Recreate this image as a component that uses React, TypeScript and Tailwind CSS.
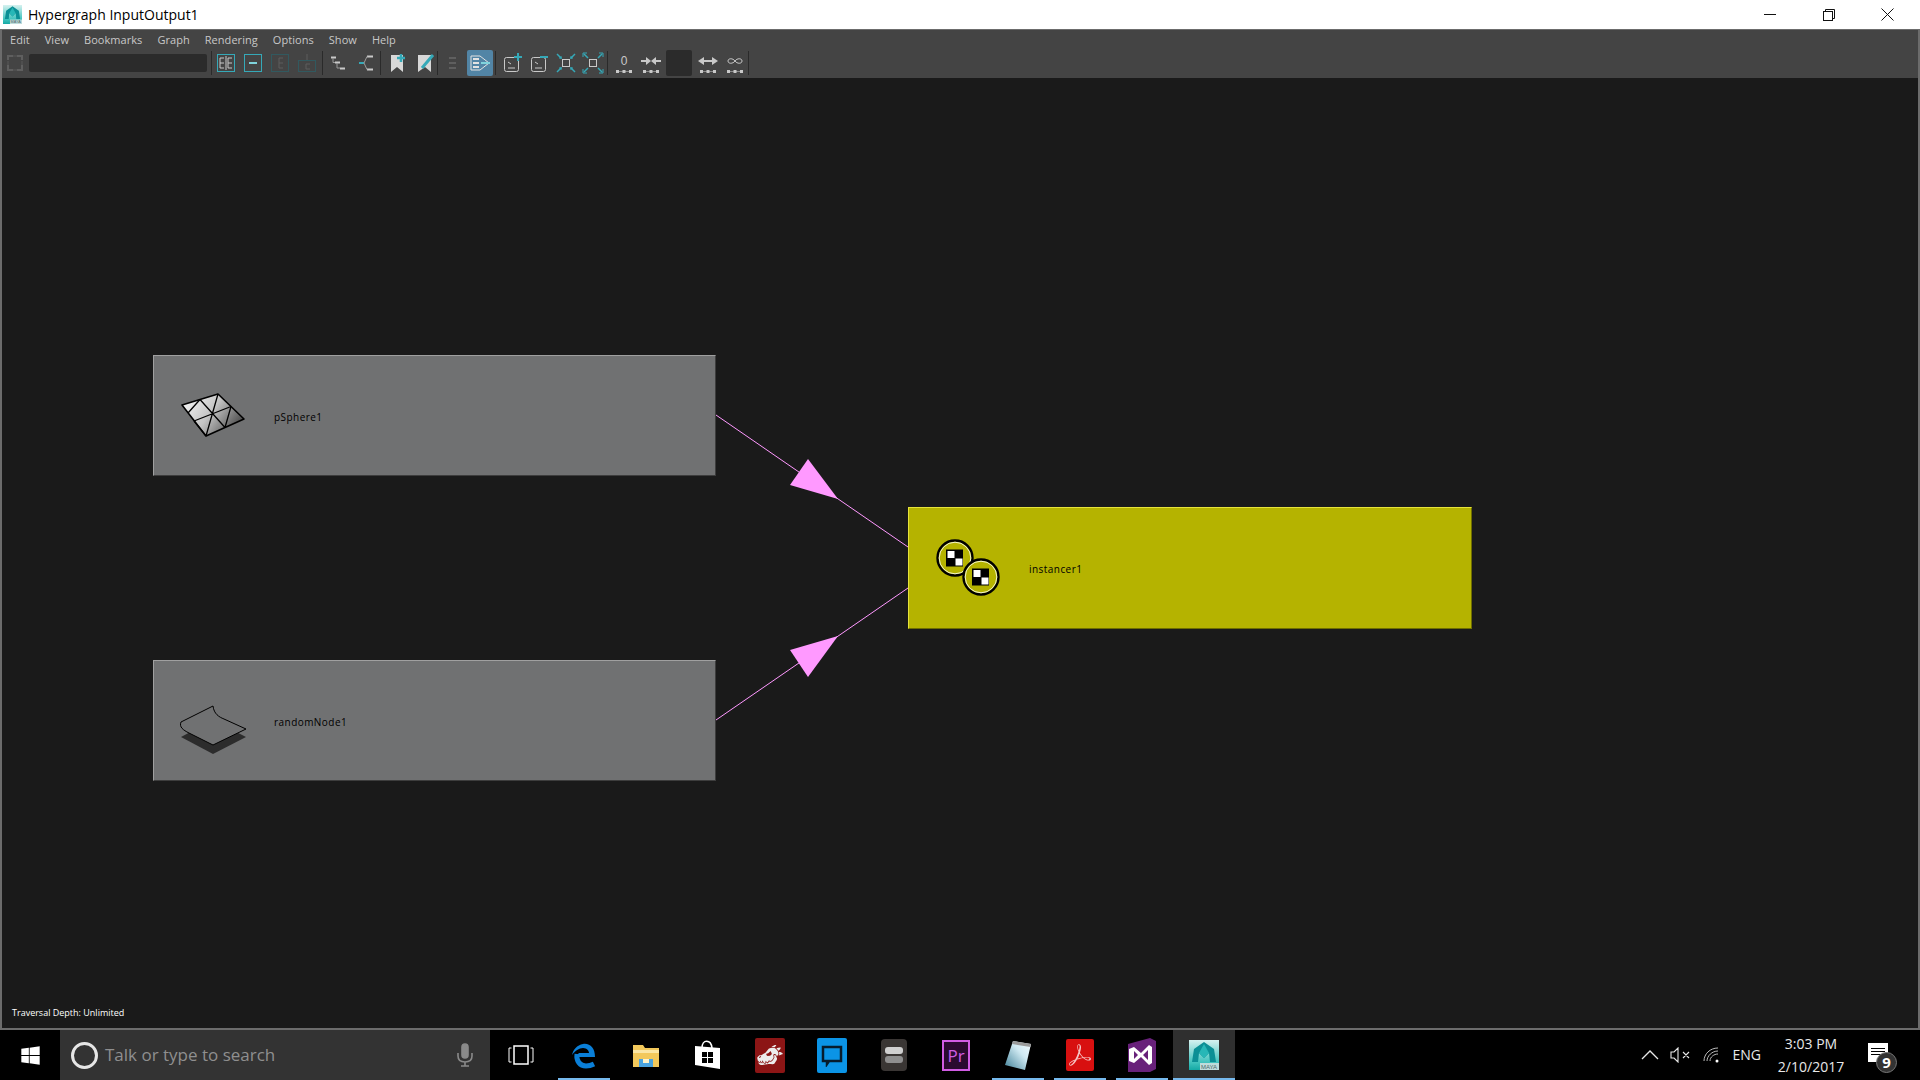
import type { ReactNode } from "react";
import { FaWindows } from "react-icons/fa";
import { GiDragonHead } from "react-icons/gi";
import { SiAdobeacrobatreader } from "react-icons/si";

const menus = ["Edit", "View", "Bookmarks", "Graph", "Rendering", "Options", "Show", "Help"];

const L = "#c9c9c9";
const T = "#35a9b8";

function MayaLogo({ size }: { size: number }) {
  return (
    <svg width={size} height={size} viewBox="0 0 30 30">
      <defs>
        <linearGradient id="mayaBg" x1="0" y1="0" x2="0" y2="1">
          <stop offset="0" stopColor="#d6f2f0" />
          <stop offset="0.75" stopColor="#3fc2bd" />
          <stop offset="1" stopColor="#15a9a5" />
        </linearGradient>
      </defs>
      <rect width="30" height="30" fill="url(#mayaBg)" />
      <path d="M3 22 L5 9 L15 2 L25 9 L27 22 L21 22 L20 13 L15 18 L10 13 L9 22 Z" fill="#0b8f95" />
      <path d="M10 13 L15 4 L20 13 L15 18 Z" fill="#27b7b7" />
      <rect x="11" y="23" width="19" height="7" fill="#bfdcdb" />
      <text x="12" y="29" fontSize="6" fontFamily="'Liberation Sans', sans-serif" fill="#4d6a6b">MAYA</text>
    </svg>
  );
}

function Dots() {
  return (
    <g>
      <path d="M5 20.500h14" stroke="#8a8a8a" strokeWidth="1" />
      <rect x="4" y="19" width="3" height="3" fill={L} />
      <rect x="10.500" y="19" width="3" height="3" fill={L} />
      <rect x="17" y="19" width="3" height="3" fill={L} />
    </g>
  );
}

function Tool({ children, className = "" }: { children?: ReactNode; className?: string }) {
  return (
    <div className={`flex h-[26px] w-[27px] shrink-0 items-center justify-center ${className}`}>
      <svg width="24" height="24" viewBox="0 0 24 24" fill="none">
        {children}
      </svg>
    </div>
  );
}

function Sep({ className = "" }: { className?: string }) {
  return <div className={`h-[24px] w-px shrink-0 bg-[#2a2a2a] ${className}`} />;
}

function Toolbar() {
  return (
    <div className="flex h-[28px] items-center pb-[3px]">
      <div className="ml-[1px] w-[25px] shrink-0">
        <svg width="24" height="24" viewBox="0 0 24 24" fill="none" stroke="#5f5f5f" strokeWidth="2">
          <path d="M5 9V5h5M14 5h5v4M19 14v5h-5M10 19H5v-5" />
          <path d="M5 10v4M19 10v4M10 5h4M10 19h4" stroke="#4e4e4e" />
        </svg>
      </div>
      <div className="ml-[1px] h-[18px] w-[178px] shrink-0 rounded-[2px] bg-[#2b2b2b]" />
      <Sep className="ml-[4px]" />
      <Tool>
        <rect x="3.5" y="3.5" width="17" height="17" stroke={T} />
        <path d="M6 7h4M6 7v10M6 12h4M6 17h4M14 7h4M14 7v10M14 12h4M14 17h4" stroke={L} />
        <path d="M12 5v14" stroke={L} />
      </Tool>
      <Tool>
        <rect x="3.5" y="3.5" width="17" height="17" stroke={T} />
        <path d="M8 12h8" stroke="#7fd3dc" strokeWidth="2" />
      </Tool>
      <Tool>
        <rect x="3.5" y="3.5" width="17" height="17" stroke="#31595f" />
        <path d="M11 7h4M11 7v10M11 12h4M11 17h4" stroke="#5d5d5d" />
      </Tool>
      <Tool>
        <rect x="3.5" y="9.5" width="17" height="11" stroke="#31595f" />
        <path d="M12 3v6M11 13h4M11 13v5h4" stroke="#5d5d5d" />
      </Tool>
      <Sep className="ml-[2px]" />
      <Tool className="ml-[1px]">
        <path d="M5 6.500h5M9 11.500h5M14 17.500h5" stroke={L} strokeWidth="2" />
        <path d="M7 7v4.500h2M11 12v5h3" stroke="#9a9a9a" strokeWidth="1" />
      </Tool>
      <Tool>
        <path d="M14 5.500h6M14 18.500h6" stroke={L} strokeWidth="2" />
        <path d="M6 12h5" stroke={T} strokeWidth="2" />
        <path d="M14 5.500l-3 6.500 3 6.500" stroke="#9a9a9a" strokeWidth="1" />
      </Tool>
      <Sep className="ml-[2px]" />
      <Tool className="ml-[3px]">
        <path d="M5 4h12v17l-6-5-6 5z" fill="#d8d8d8" />
        <path d="M15 3v8M11 7h8" stroke={T} strokeWidth="2.5" />
      </Tool>
      <Tool>
        <path d="M5 4h13v17l-6-5-7 5z" fill="#d8d8d8" />
        <path d="M9 17L20 4" stroke={T} strokeWidth="3" />
      </Tool>
      <Sep className="-ml-[1px]" />
      <Tool className="ml-[1px]">
        <path d="M8 7h7M8 12h7M8 17h7" stroke="#5f5f5f" strokeWidth="2" />
      </Tool>
      <div className="ml-[1px] flex h-[26px] w-[26px] shrink-0 items-center justify-center rounded-[2px] bg-[#5285a6]">
        <svg width="24" height="24" viewBox="0 0 24 24" fill="none">
          <path d="M3 5h9l9 7-9 7H3z" stroke="#e2e2e2" />
          <path d="M5 8h6M5 12h6M5 16h6" stroke="#e2e2e2" strokeWidth="2" />
          <path d="M13 12h9" stroke="#7fd3dc" strokeWidth="2" />
        </svg>
      </div>
      <Sep className="ml-[2px]" />
      <Tool className="ml-[2px]">
        <rect x="4.5" y="6.5" width="14" height="14" rx="2" stroke={L} />
        <path d="M8 11l3 2M8 17h7" stroke={L} />
        <path d="M18 2v8M14 6h8" stroke={T} strokeWidth="2" />
      </Tool>
      <Tool>
        <rect x="4.5" y="6.5" width="14" height="14" rx="2" stroke={L} />
        <path d="M8 11l3 2M8 17h7" stroke={L} />
        <path d="M13 6h8" stroke={T} strokeWidth="2" />
      </Tool>
      <Tool>
        <rect x="8.5" y="8.5" width="7" height="7" stroke={L} />
        <path d="M3 3l4 4M21 3l-4 4M3 21l4-4M21 21l-4-4" stroke={T} strokeWidth="1.5" />
        <path d="M8 7H5M7 8V5M16 7h3M17 8V5M8 17H5M7 16v3M16 17h3M17 16v3" stroke={T} />
      </Tool>
      <Tool>
        <rect x="8.5" y="8.5" width="7" height="7" stroke={L} />
        <path d="M3 3l4 4M21 3l-4 4M3 21l4-4M21 21l-4-4" stroke={T} strokeWidth="1.5" />
        <path d="M2 6V2h4M22 6V2h-4M2 18v4h4M22 18v4h-4" stroke={T} />
      </Tool>
      <Sep className="ml-[1px]" />
      <Tool className="ml-[2px]">
        <text x="12" y="14" textAnchor="middle" fontSize="12" fontFamily="'Liberation Sans', sans-serif" fill={L}>0</text>
        <Dots />
      </Tool>
      <Tool>
        <path d="M2 10h7M22 10h-7" stroke={L} strokeWidth="2" />
        <path d="M7 6l5 4-5 4zM17 6l-5 4 5 4z" fill={L} />
        <Dots />
      </Tool>
      <div className="ml-[2px] h-[26px] w-[26px] shrink-0 rounded-[2px] bg-[#2b2b2b]" />
      <Tool className="ml-[2px]">
        <path d="M6 10h12" stroke={L} strokeWidth="2" />
        <path d="M8 6l-6 4 6 4zM16 6l6 4-6 4z" fill={L} />
        <Dots />
      </Tool>
      <Tool>
        <path d="M12 10c-2-3-7-3-7 0s5 3 7 0c2-3 7-3 7 0s-5 3-7 0z" stroke={L} />
        <Dots />
      </Tool>
      <Sep />
    </div>
  );
}

function Node({
  x,
  y,
  icon,
  label,
  indent,
  yellow = false,
}: {
  x: string;
  y: string;
  icon: ReactNode;
  label: string;
  indent: string;
  yellow?: boolean;
}) {
  return (
    <div
      className={`absolute ${x} ${y} flex items-center border ${
        yellow
          ? "h-[122px] w-[564px] border-t-[#e6e43a] border-l-[#e6e43a] border-r-[#6e6d00] border-b-[#6e6d00] bg-[#b5b300]"
          : "h-[121px] w-[563px] border-t-[#a0a0a0] border-l-[#a0a0a0] border-r-[#3d3d3d] border-b-[#3d3d3d] bg-[#707172]"
      }`}
    >
      <div className={`shrink-0 ${indent}`}>{icon}</div>
      <span
        className={`mt-[2px] text-[10px] leading-none tracking-[0.45px] text-black [font-family:'Open_Sans',sans-serif] ${
          yellow ? "ml-[21px]" : "ml-[26px]"
        }`}
      >
        {label}
      </span>
    </div>
  );
}

function SphereIcon() {
  return (
    <svg width="72" height="72" viewBox="0 0 72 72" fill="none" className="block">
      <defs>
        <linearGradient id="sph" x1="0" y1="0" x2="1" y2="0.5">
          <stop offset="0" stopColor="#ffffff" />
          <stop offset="0.55" stopColor="#c4c4c4" />
          <stop offset="1" stopColor="#555555" />
        </linearGradient>
      </defs>
      <path d="M6 25L42 14L68 39L30 56Z" fill="url(#sph)" stroke="#000" strokeWidth="1.6" strokeLinejoin="round" />
      <path d="M18 41L55 26.5M24 19.5L49 47.5M24 19.5L12 33M42 14L30 56M55 26.5L49 47.5M18 41L30 56" stroke="#000" strokeWidth="1.3" />
    </svg>
  );
}

function PaperIcon() {
  return (
    <svg width="72" height="72" viewBox="0 0 72 72" fill="none" className="block">
      <path d="M5 52L37 35L70 52L37 69Z" fill="#2c2c2c" />
      <path d="M37 21C38 29 43 32 48 34L70 44L37 60L13 48C7 45 3 42 5 37Z" fill="#707172" stroke="#000" />
    </svg>
  );
}

function Checker({ cx, cy }: { cx: number; cy: number }) {
  return (
    <g>
      <circle cx={cx} cy={cy} r="17.5" fill="#b5b300" stroke="#000" strokeWidth="2.4" />
      <circle cx={cx} cy={cy} r="15.8" stroke="#f3f3d0" strokeWidth="1" fill="none" />
      <rect x={cx - 9} y={cy - 8.5} width="17" height="17" fill="#000" />
      <rect x={cx - 7.5} y={cy - 7} width="7" height="7" fill="#fff" />
      <rect x={cx + 0.5} y={cy + 0.5} width="7" height="7" fill="#fff" />
    </g>
  );
}

function InstancerIcon() {
  return (
    <svg width="72" height="72" viewBox="0 0 72 72" fill="none" className="block">
      <Checker cx={19} cy={26} />
      <Checker cx={45} cy={45} />
    </svg>
  );
}

function Graph() {
  return (
    <div className="relative min-h-0 flex-1 overflow-hidden bg-[#1a1a1a]">
      <svg className="absolute inset-0" width="1916" height="950" viewBox="0 0 1916 950" fill="none">
        <path d="M714 337L906 469M714 642L906 510" stroke="#ff99ff" strokeWidth="1" />
        <path d="M806 381L788 407L836 421Z" fill="#ff99ff" />
        <path d="M836 558L788 572L806 599Z" fill="#ff99ff" />
      </svg>
      <Node x="left-[151px]" y="top-[277px]" icon={<SphereIcon />} label="pSphere1" indent="ml-[22px]" />
      <Node x="left-[151px]" y="top-[582px]" icon={<PaperIcon />} label="randomNode1" indent="ml-[22px]" />
      <Node x="left-[906px]" y="top-[429px]" icon={<InstancerIcon />} label="instancer1" indent="ml-[27px]" yellow />
      <span className="absolute bottom-[11px] left-[10px] text-[9px] leading-none text-white [font-family:'Open_Sans',sans-serif]">
        Traversal Depth: Unlimited
      </span>
    </div>
  );
}

function EdgeIcon() {
  return (
    <svg width="30" height="30" viewBox="0 0 30 30" fill="none">
      <path d="M6 17h20C26 8 21 3 14 4 8 5 4 10 3 15c3-4 7-7 11-7 4 0 6 3 6 5H10" fill="#0a7fd8" />
      <path d="M8 14c-1 7 3 12 9 12 3 0 6-1 8-2" stroke="#0a7fd8" strokeWidth="5" />
    </svg>
  );
}

function StoreIcon() {
  return (
    <svg width="28" height="32" viewBox="0 0 28 32" fill="none">
      <path d="M8 9C8 0 17 0 18 9" stroke="#fff" strokeWidth="1.6" />
      <path d="M1 7L26 9V30L1 26Z" fill="#fff" />
      <path d="M8 13h5v5H8zM14 13h5v5h-5zM8 19h5v5H8zM14 19h5v5h-5z" fill="#000" />
    </svg>
  );
}

function ExplorerIcon() {
  return (
    <svg width="28" height="26" viewBox="0 0 28 26">
      <path d="M1 3h10l2 3h14v19H1z" fill="#f2c85b" />
      <path d="M1 8h26v3H1z" fill="#fbe6a4" />
      <path d="M7 17h14v8H7z" fill="#4aa3df" />
      <path d="M11 17h6v4h-6z" fill="#fff3c9" />
    </svg>
  );
}

function Slot({ children, bar = false, active = false }: { children: ReactNode; bar?: boolean; active?: boolean }) {
  return (
    <div className={`relative flex h-[50px] w-[62px] shrink-0 items-center justify-center ${active ? "bg-[#2f2f2f]" : ""}`}>
      {children}
      {bar && <div className={`absolute bottom-0 h-[2px] bg-[#76b9ed] ${active ? "inset-x-0" : "inset-x-[5px]"}`} />}
    </div>
  );
}

function Taskbar() {
  return (
    <div className="flex h-[50px] items-center bg-black text-white [font-family:'Open_Sans',sans-serif]">
      <div className="flex h-full w-[60px] shrink-0 items-center justify-center">
        <FaWindows size={21} />
      </div>
      <div className="flex h-full w-[430px] shrink-0 items-center bg-[#333333]">
        <div className="ml-[11px] h-[27px] w-[27px] shrink-0 rounded-full border-[3px] border-[#e6e6e6]" />
        <span className="ml-[7px] text-[17px] text-[#8f8f8f]">Talk or type to search</span>
        <svg className="ml-auto mr-[16px]" width="18" height="26" viewBox="0 0 18 26" fill="none" stroke="#8a8a8a" strokeWidth="1.6">
          <rect x="6" y="2" width="6" height="14" rx="3" fill="#8a8a8a" />
          <path d="M2 11v3c0 4 3 6 7 6s7-2 7-6v-3M9 20v4M5 24h8" />
        </svg>
      </div>
      <Slot>
        <svg width="26" height="22" viewBox="0 0 26 22" fill="none" stroke="#fff" strokeWidth="1.5">
          <rect x="6" y="2" width="14" height="18" />
          <path d="M3.5 4H1v14h2.500M22.500 4H25v14h-2.500" strokeWidth="1" />
        </svg>
      </Slot>
      <div className="w-px shrink-0" />
      <Slot bar>
        <EdgeIcon />
      </Slot>
      <Slot>
        <ExplorerIcon />
      </Slot>
      <Slot>
        <StoreIcon />
      </Slot>
      <Slot>
        <div className="flex h-[35px] w-[30px] items-center justify-center rounded-[2px] bg-[#8c1515]">
          <GiDragonHead size={28} color="#ececec" />
        </div>
      </Slot>
      <Slot>
        <div className="flex h-[35px] w-[30px] items-center justify-center rounded-[2px] bg-[#0b94e6]">
          <svg width="24" height="24" viewBox="0 0 24 24" fill="none">
            <path d="M3 4h18v14H9l-2 3v-3H3z" stroke="#071c2c" strokeWidth="2.5" />
          </svg>
        </div>
      </Slot>
      <Slot>
        <div className="flex h-[32px] w-[26px] flex-col items-center justify-center gap-[2px] rounded-[4px] bg-[#3a3634]">
          <div className="h-[7px] w-[18px] rounded-[3px] bg-[#d0d0d0]" />
          <div className="h-[7px] w-[18px] rounded-[3px] bg-[#8f8f8f]" />
        </div>
      </Slot>
      <Slot>
        <div className="flex h-[31px] w-[28px] items-center justify-center border-2 border-[#d05ce3] bg-[#2a0a30] text-[17px] leading-none text-[#d05ce3]">
          Pr
        </div>
      </Slot>
      <Slot bar>
        <svg width="28" height="32" viewBox="0 0 28 32">
          <defs>
            <linearGradient id="pad" x1="0" y1="1" x2="1" y2="0">
              <stop offset="0" stopColor="#3d7f96" />
              <stop offset="0.6" stopColor="#cfe9f2" />
              <stop offset="1" stopColor="#f4fbff" />
            </linearGradient>
          </defs>
          <path d="M9 2L27 5L21 31L1 26Z" fill="url(#pad)" />
          <path d="M9 2L27 5L26.500 8L8 5Z" fill="#9a9a9a" />
        </svg>
      </Slot>
      <Slot bar>
        <div className="flex h-[32px] w-[28px] items-center justify-center rounded-[2px] bg-[#d81010]">
          <SiAdobeacrobatreader size={22} color="#f6c6c6" />
        </div>
      </Slot>
      <Slot bar>
        <svg width="28" height="34" viewBox="0 0 28 34">
          <path d="M0 6L22 0L28 3V31L22 34H0Z" fill="#68217a" />
          <path d="M1 11L6 9L13 15L21 7L24 9V25L21 27L13 19L6 25L1 23ZM6 13V21L10 17ZM20 12L15 17L20 22Z" fill="#fff" />
        </svg>
      </Slot>
      <Slot bar active>
        <MayaLogo size={30} />
      </Slot>
      <div className="ml-auto flex h-full shrink-0 items-center">
        <svg width="18" height="10" viewBox="0 0 18 10" fill="none" stroke="#e8e8e8" strokeWidth="1.3">
          <path d="M1 9l8-8 8 8" />
        </svg>
        <svg className="ml-[11px]" width="20" height="16" viewBox="0 0 20 16" fill="none" stroke="#e8e8e8" strokeWidth="1.1">
          <path d="M1 5h3l4-4v14l-4-4H1zM13 5l6 6M19 5l-6 6" />
        </svg>
        <svg className="ml-[13px]" width="16" height="16" viewBox="0 0 16 16" fill="none" stroke="#bdbdbd" strokeWidth="1">
          <path d="M1 14C1 7 7 1 15 1M4 14c0-5 5-10 11-10M7 14c0-4 4-7 8-7" />
          <circle cx="14" cy="14" r="1.500" fill="#fff" stroke="none" />
        </svg>
        <span className="ml-[14px] text-[14px] leading-none text-[#e8e8e8]">ENG</span>
        <div className="ml-[16px] flex w-[68px] flex-col items-center text-[14px] leading-[23px] text-[#e8e8e8]">
          <span>3:03 PM</span>
          <span>2/10/2017</span>
        </div>
        <div className="relative -mt-[6px] ml-[23px] mr-[32px] h-[19px] w-[20px] bg-white">
          <div className="ml-[3px] mt-[5px] h-[1px] w-[14px] bg-black" />
          <div className="ml-[3px] mt-[2px] h-[1px] w-[14px] bg-black" />
          <div className="ml-[3px] mt-[2px] h-[1px] w-[14px] bg-black" />
          <span className="absolute left-[8px] top-[9px] flex h-[21px] w-[21px] items-center justify-center rounded-full border border-[#777] bg-[#333] text-[15px] font-bold leading-none text-white">
            9
          </span>
        </div>
      </div>
    </div>
  );
}

export default function App() {
  return (
    <div className="flex h-[1080px] w-[1920px] flex-col overflow-hidden bg-black">
      <div className="flex h-[29px] shrink-0 items-center bg-white">
        <div className="ml-[3px]">
          <MayaLogo size={19} />
        </div>
        <span className="ml-[6px] text-[14px] leading-none text-black [font-family:'Open_Sans',sans-serif]">Hypergraph InputOutput1</span>
        <div className="ml-auto flex items-center">
          <div className="mr-[47px] h-px w-[12px] bg-[#111]" />
          <svg className="mr-[46px]" width="12" height="12" viewBox="0 0 12 12" fill="none" stroke="#111">
            <rect x="0.500" y="2.500" width="9" height="9" />
            <path d="M2.500 2.500v-2h9v9h-2" />
          </svg>
          <svg className="mr-[26px]" width="13" height="13" viewBox="0 0 13 13" stroke="#111" fill="none">
            <path d="M0.500 0.500l12 12M12.500 0.500l-12 12" />
          </svg>
        </div>
      </div>
      <div className="flex min-h-0 flex-1 flex-col border-x-2 border-b-2 border-t border-[#6c6c6c] bg-[#444444] text-[#c8c8c8]">
        <div className="flex h-[20px] shrink-0 items-center gap-[15px] pb-[2px] pl-[8px] text-[11px] leading-none tracking-[0.05px] [font-family:'Open_Sans',sans-serif]">
          {menus.map((m) => (
            <span key={m}>{m}</span>
          ))}
        </div>
        <Toolbar />
        <Graph />
      </div>
      <Taskbar />
    </div>
  );
}
